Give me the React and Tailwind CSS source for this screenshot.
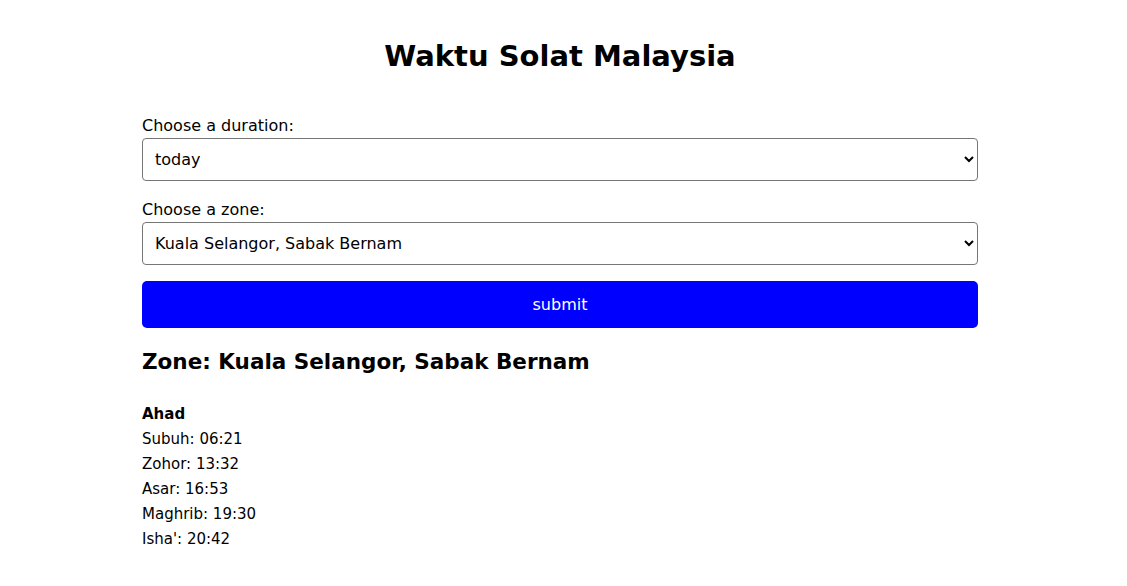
export default function App() {
  const times = [
    ['Subuh', '06:21'],
    ['Zohor', '13:32'],
    ['Asar', '16:53'],
    ['Maghrib', '19:30'],
    ["Isha'", '20:42'],
  ];
  return (
    <div className="min-h-screen bg-white text-black pr-[7px]" style={{ fontFamily: '"DejaVu Sans", sans-serif' }}>
      <div className="mx-auto w-[836px] pt-[36px]">
        <h1 className="text-center text-[29px] font-bold leading-[40px]">Waktu Solat Malaysia</h1>
        <form className="mt-[38px] flex flex-col" onSubmit={e => e.preventDefault()}>
          <label className="text-[16px] leading-[24px]">Choose a duration:</label>
          <select className="h-[43px] w-full rounded-[4px] border border-[#767676] bg-white px-[8px] text-[16px]" defaultValue="today">
            <option value="today">today</option>
            <option value="week">week</option>
            <option value="month">month</option>
          </select>
          <label className="mt-[17px] text-[16px] leading-[24px]">Choose a zone:</label>
          <select className="h-[43px] w-full rounded-[4px] border border-[#767676] bg-white px-[8px] text-[16px]" defaultValue="SGR02">
            <option value="SGR02">Kuala Selangor, Sabak Bernam</option>
          </select>
          <button type="submit" className="mt-[16px] h-[47px] w-full rounded-[5px] bg-[#0000ff] text-[16px] text-white">submit</button>
        </form>
        <h2 className="mt-[19px] text-[21.5px] font-bold leading-[30px]">Zone: Kuala Selangor, Sabak Bernam</h2>
        <div className="mt-[25px] text-[15px] leading-[25px]">
          <div className="font-bold">Ahad</div>
          {times.map(([n, t]) => (
            <div key={n}>{n}: {t}</div>
          ))}
        </div>
      </div>
    </div>
  );
}
